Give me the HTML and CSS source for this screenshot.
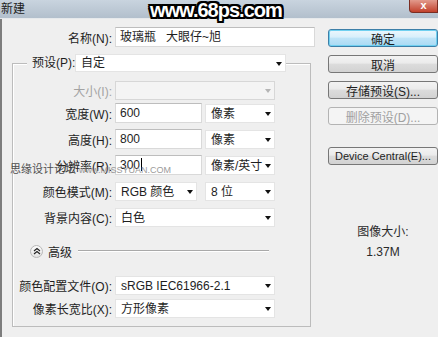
FILE: index.html
```html
<!DOCTYPE html>
<html lang="zh-CN">
<head>
    <meta charset="UTF-8">
    <meta name="viewport" content="width=device-width, initial-scale=1.0">
    <title>新建</title>
    <link rel="stylesheet" href="styles.css">
</head>
<body>

    <div class="window">
        <!-- title bar -->
        <div class="titlebar">
            <span class="title">新建</span>
            <span class="site-mark">www.68ps.com</span>
            <span class="close">x</span>
        </div>

        <div class="dialog">
            <div class="main">
                <div class="row name-row">
                    <label class="lbl">名称(N):</label>
                    <div class="field name-field">玻璃瓶&nbsp;&nbsp;&nbsp;大眼仔~旭</div>
                </div>

                <div class="group">
                    <div class="row preset-row">
                        <label class="legend">预设(P):</label>
                        <div class="select preset-select">自定<span class="arrow"></span></div>
                    </div>

                    <div class="row size-row">
                        <label class="lbl disabled">大小(I):</label>
                        <div class="select wide off"><span class="arrow"></span></div>
                    </div>

                    <div class="row tight">
                        <label class="lbl">宽度(W):</label>
                        <div class="field num">600</div>
                        <div class="select unit">像素<span class="arrow"></span></div>
                    </div>

                    <div class="row">
                        <label class="lbl">高度(H):</label>
                        <div class="field num">800</div>
                        <div class="select unit">像素<span class="arrow"></span></div>
                    </div>

                    <div class="row">
                        <label class="lbl">分辨率(R):</label>
                        <div class="field num">300<span class="caret"></span></div>
                        <div class="select unit">像素/英寸<span class="arrow"></span></div>
                    </div>

                    <div class="row">
                        <label class="lbl">颜色模式(M):</label>
                        <div class="select mode">RGB 颜色<span class="arrow"></span></div>
                        <div class="select unit">8 位<span class="arrow"></span></div>
                    </div>

                    <div class="row">
                        <label class="lbl">背景内容(C):</label>
                        <div class="select wide">白色<span class="arrow"></span></div>
                    </div>

                    <div class="advanced">
                        <span class="chevron">
                            <svg width="8" height="8" viewBox="0 0 8 8">
                                <path d="M1 4 L4 1.5 L7 4 M1 7 L4 4.5 L7 7" fill="none" stroke="#222" stroke-width="1.1"/>
                            </svg>
                        </span>
                        <span class="adv-text">高级</span>
                        <span class="adv-line"></span>
                    </div>

                    <div class="row profile-row">
                        <label class="lbl">颜色配置文件(O):</label>
                        <div class="select wide">sRGB IEC61966-2.1<span class="arrow"></span></div>
                    </div>

                    <div class="row tight">
                        <label class="lbl">像素长宽比(X):</label>
                        <div class="select wide">方形像素<span class="arrow"></span></div>
                    </div>
                </div>
            </div>

            <div class="side">
                <button class="btn default">确定</button>
                <button class="btn">取消</button>
                <button class="btn">存储预设(S)...</button>
                <button class="btn" disabled>删除预设(D)...</button>
                <button class="btn device">Device Central(E)...</button>

                <div class="img-size">
                    <div>图像大小:</div>
                    <div class="img-value">1.37M</div>
                </div>
            </div>
        </div>

        <!-- forum watermark over the resolution row -->
        <div class="forum-mark">思缘设计论坛 <small>www.MISSYUAN.COM</small></div>
    </div>

</body>
</html>
```

FILE: styles.css
```css
* {
    box-sizing: border-box;
}
body {
    margin: 0;
    width: 438px;
    height: 337px;
    overflow: hidden;
    font-family: "Liberation Sans", "Noto Sans CJK SC", sans-serif;
    font-size: 12px;
    color: #1e1e1e;
    background: #efefef;
}
.window {
    position: relative;
    height: 337px;
}
.titlebar {
    position: relative;
    height: 19px;
    background: linear-gradient(#c9d4df, #b2bfcc);
    border-bottom: 1px solid #e6e9ec;
}
.title {
    display: block;
    padding-left: 1px;
    line-height: 18px;
    color: #222;
}
.site-mark {
    position: absolute;
    left: 150px;
    top: 0;
    font-size: 20px;
    font-weight: bold;
    line-height: 20px;
    letter-spacing: -1px;
    color: #fff;
    text-shadow: 2px 0 #000, -2px 0 #000, 0 2px #000, 0 -2px #000,
        1px 1px #000, -1px -1px #000, 1px -1px #000, -1px 1px #000,
        2px 2px #000, -2px -2px #000, 2px -2px #000, -2px 2px #000;
}
.close {
    position: absolute;
    right: 0;
    top: 0;
    width: 29px;
    height: 13px;
    background: linear-gradient(#e29a8c, #c2412c);
    border: 1px solid #7a2d22;
    border-top: none;
    border-radius: 0 0 0 4px;
    color: #fff;
    font-size: 11px;
    font-weight: bold;
    line-height: 11px;
    text-align: center;
}
.dialog {
    display: flex;
    gap: 10px;
    height: 318px;
    padding-top: 8px;
    border-left: 2px solid #7d7d7d;
}
.main {
    width: 316px;
}
.row {
    display: flex;
    align-items: center;
    gap: 3px;
    height: 20px;
    margin-top: 6px;
}
.row.tight {
    margin-top: 3px;
}
.lbl {
    width: 99px;
    text-align: right;
    white-space: nowrap;
}
.lbl.disabled {
    color: #a3a3a3;
}
.name-row {
    margin-top: 0;
}
.name-row .lbl {
    width: 110px;
}
.field {
    height: 20px;
    padding: 0 4px;
    line-height: 19px;
    background: #fff;
    border: 1px solid #d9d9d9;
    border-top-color: #bdbdbd;
    white-space: nowrap;
}
.name-field {
    width: 200px;
}
.num {
    width: 87px;
}
.caret {
    display: inline-block;
    width: 1px;
    height: 13px;
    margin-left: 1px;
    vertical-align: -2px;
    background: #000;
}
.select {
    position: relative;
    height: 19px;
    padding: 0 5px;
    line-height: 19px;
    background: #fff;
    border: 1px solid #e4e4e4;
    white-space: nowrap;
}
.select .arrow {
    position: absolute;
    right: 3px;
    top: 7px;
    border-left: 3.5px solid transparent;
    border-right: 3.5px solid transparent;
    border-top: 4px solid #111;
}
.select.off {
    background: #f4f4f4;
    border-color: #d7d7d7;
}
.select.off .arrow {
    border-top-color: #b5b5b5;
}
.wide {
    width: 160px;
}
.unit {
    width: 70px;
}
.mode {
    width: 82px;
    margin-right: 5px;
}
.group {
    margin: 16px 0 0 10px;
    width: 299px;
    height: 264px;
    border: 1px solid #bcbcbc;
    box-shadow: inset 1px 1px #fff;
}
.preset-row {
    margin-top: -10px;
    height: 18px;
    gap: 0;
}
.legend {
    width: 48px;
    margin-left: 14px;
    padding-left: 5px;
    line-height: 18px;
    background: #efefef;
    white-space: nowrap;
}
.preset-select {
    width: 211px;
    height: 18px;
    line-height: 17px;
}
.size-row {
    margin-top: 8px;
}
.advanced {
    display: flex;
    align-items: center;
    height: 14px;
    margin: 17px 0 0 17px;
}
.chevron {
    display: flex;
    align-items: center;
    justify-content: center;
    width: 13px;
    height: 13px;
    border: 1px solid #b8b8b8;
    border-radius: 50%;
    background: linear-gradient(#fdfdfd, #e2e2e2);
}
.adv-text {
    margin-left: 5px;
}
.adv-line {
    width: 191px;
    margin-left: 6px;
    border-top: 1px solid #a9a9a9;
    border-bottom: 1px solid #fff;
}
.profile-row {
    margin-top: 17px;
}
.side {
    width: 110px;
    display: flex;
    flex-direction: column;
    gap: 8px;
    padding-top: 2px;
}
.btn {
    height: 18px;
    padding: 0;
    font-family: inherit;
    font-size: 12px;
    color: #1e1e1e;
    background: linear-gradient(#f3f3f3 0%, #ebebeb 45%, #dcdcdc 50%, #d2d2d2 100%);
    border: 1px solid #777;
    border-radius: 3px;
}
.btn.default {
    background: linear-gradient(#ecf7fd 0%, #d8effb 45%, #bfe4f8 50%, #a9daf4 100%);
    border-color: #3d7fa8;
    box-shadow: inset 0 0 0 1px #6fd0f0;
}
.btn:disabled {
    color: #a0a0a0;
    background: #f4f4f4;
    border-color: #b3b3b3;
}
.btn.device {
    margin-top: 14px;
    font-size: 11px;
}
.img-size {
    margin-top: 49px;
    text-align: center;
    line-height: 20px;
    color: #2a2a2a;
}
.forum-mark {
    position: absolute;
    left: 10px;
    top: 160px;
    font-size: 11px;
    color: #333;
    opacity: 0.85;
}
.forum-mark small {
    font-size: 9px;
    color: #8a8a8a;
}
```
